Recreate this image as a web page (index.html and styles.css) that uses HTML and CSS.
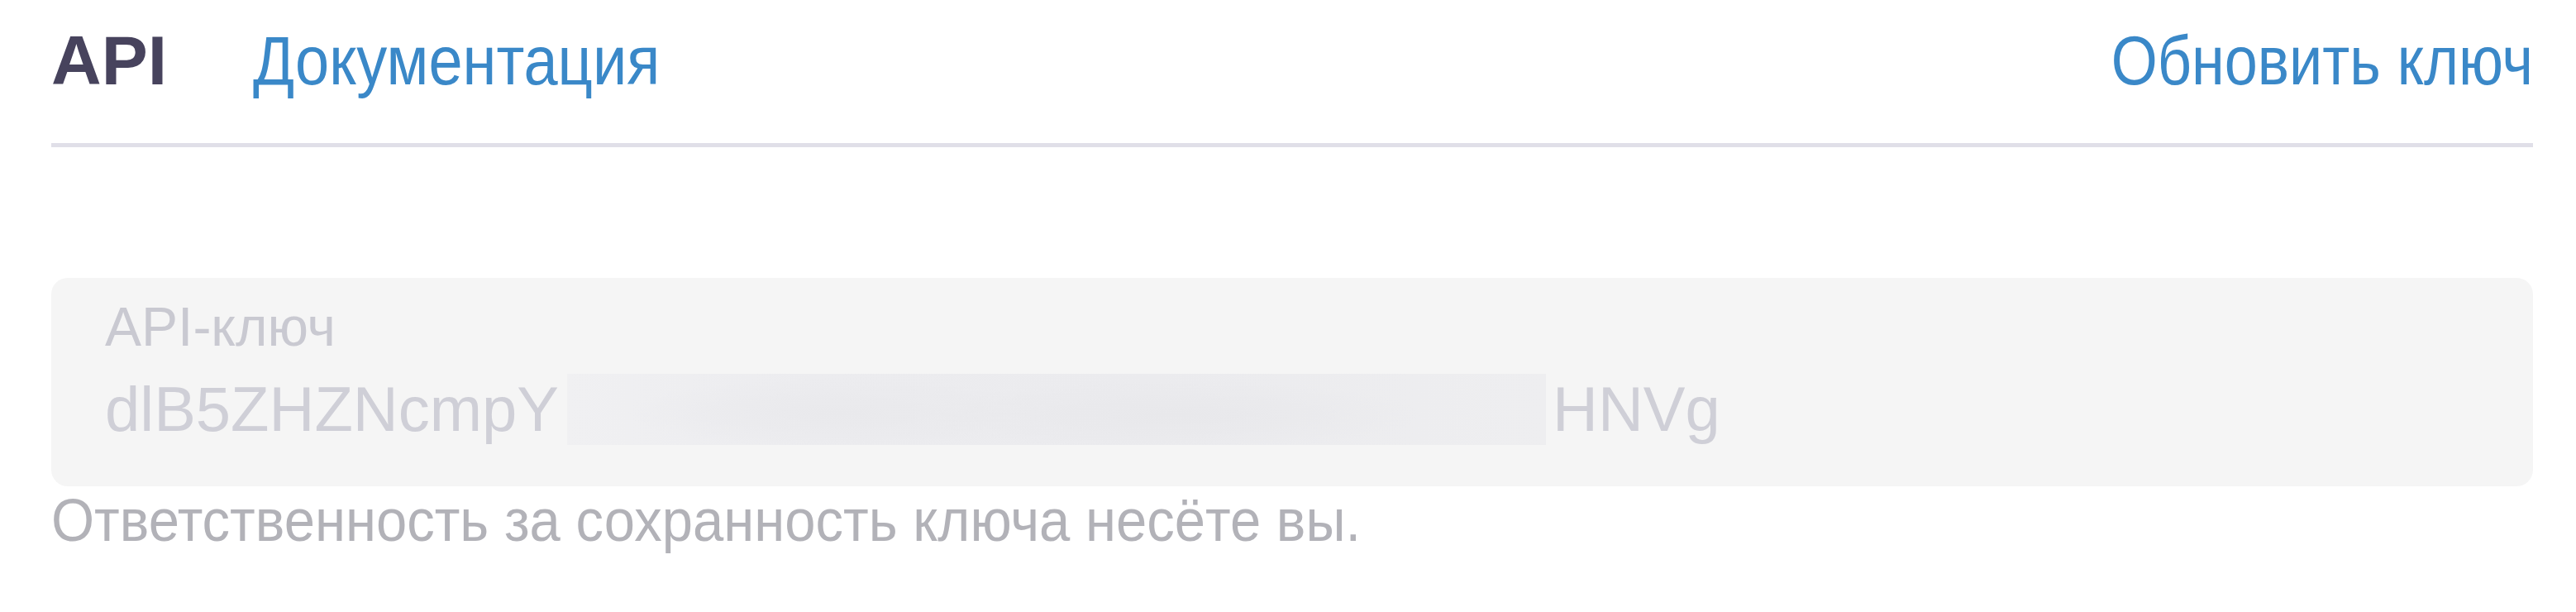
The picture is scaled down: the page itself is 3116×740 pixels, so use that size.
FILE: index.html
```html
<!DOCTYPE html>
<html lang="ru">
<head>
<meta charset="utf-8">
<title>API</title>
<link rel="stylesheet" href="styles.css">
</head>
<body>
<div class="page">
  <header class="topbar">
    <div class="tabs">
      <span class="title">API</span>
      <a class="link" href="#">Документация</a>
    </div>
    <a class="link link-right" href="#">Обновить ключ</a>
  </header>
  <section class="keybox">
    <div class="label">API-ключ</div>
    <div class="key"><span>dlB5ZHZNcmpY</span><span class="blur"></span><span>HNVg</span></div>
  </section>
  <p class="note">Ответственность за сохранность ключа несёте вы.</p>
</div>
</body>
</html>
```
FILE: styles.css
```css
html, body {
  margin: 0;
  background: #ffffff;
}
body {
  font-family: "Liberation Sans", Arial, sans-serif;
}
.page {
  padding: 25px 52px 0 62px;
}
.topbar {
  display: flex;
  justify-content: space-between;
  align-items: baseline;
  padding-bottom: 51px;
  border-bottom: 5px solid #e0dfe8;
}
.tabs {
  display: flex;
  align-items: baseline;
  gap: 104px;
}
.title {
  font-size: 84px;
  font-weight: 700;
  color: #47435d;
  line-height: 1.15;
}
.link {
  display: inline-block;
  font-size: 74px;
  color: #3a88c8;
  text-decoration: none;
  line-height: 1.15;
  transform: scaleY(1.12);
  transform-origin: 0 80%;
}
.link-right {
  font-size: 72px;
  transform: scaleY(1.15);
  transform-origin: 100% 80%;
}
.keybox {
  margin-top: 158px;
  height: 252px;
  box-sizing: border-box;
  background: #f5f5f5;
  border-radius: 20px;
  padding: 22px 65px 0;
}
.label {
  font-size: 66px;
  line-height: 1.15;
  color: #c9c9d1;
}
.key {
  display: flex;
  align-items: center;
  margin-top: 18px;
  font-size: 76px;
  line-height: 1.15;
  color: #cfcfd7;
}
.blur {
  width: 1184px;
  height: 86px;
  margin: 0 8px 0 10px;
  background:
    radial-gradient(ellipse 260px 42px at 28% 55%, #e9e9ec, transparent),
    radial-gradient(ellipse 300px 42px at 62% 58%, #e8e8eb, transparent),
    linear-gradient(90deg, #f0f0f2, #ececef 25%, #ebebee 60%, #eeeef0);
}
.note {
  margin: 4px 0 0;
  font-size: 67px;
  line-height: 1.15;
  color: #b2b2b8;
  transform: scaleY(1.08);
  transform-origin: 0 80%;
}
```
